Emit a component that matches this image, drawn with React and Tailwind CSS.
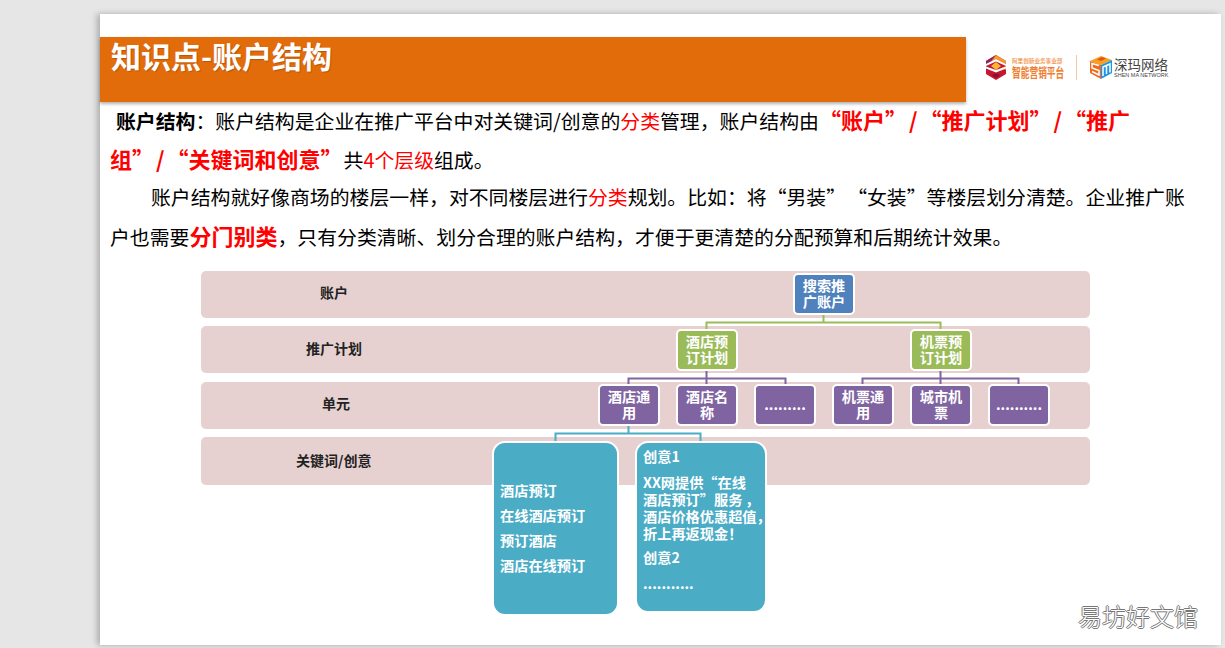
import React from "react";

const cjk = { fontFamily: '"Noto Sans CJK SC", "Noto Sans", sans-serif' };

function LogoA() {
  return (
    <svg width="20" height="25" viewBox="0 0 20 25" className="shrink-0">
      <polygon points="10,0 20,6 20,19 10,25 0,19 0,6" fill="#c3182f" />
      <polygon points="10,0 20,6 20,9 10,4 0,9 0,6" fill="#f59a23" />
      <polygon points="10,0 0,6 0,9 5,6.5" fill="#8e1f6e" />
      <polygon points="10,4 20,9 20,11 10,6.5 0,11 0,9" fill="#ffffff" />
      <polygon points="10,7 15,11 10,15 5,11" fill="#f7b733" />
      <polygon points="0,11 5,13 0,15" fill="#7d1a63" />
      <polygon points="20,11 15,13 20,15" fill="#ef7d22" />
      <polygon points="10,15 20,11.5 20,13.5 10,17.5 0,13.5 0,11.5" fill="#ffffff" />
      <polygon points="10,18 14,20.5 10,23 6,20.5" fill="#8b1230" />
    </svg>
  );
}

function LogoB() {
  return (
    <svg width="23" height="23" viewBox="0 0 23 23" className="shrink-0">
      <polygon points="11,0 22,4 11,9 0,5" fill="#f7a01f" />
      <polygon points="12,1 16,2.5 11,5 7,3.5" fill="#e8501f" />
      <polygon points="0,5 11,9 11,23 0,17" fill="#f0691c" />
      <polygon points="11,9 22,4 22,17 11,23" fill="#1e96e6" />
      <path d="M9 9.5 L2 7.5 V12 L9 14.5 V19 L2 15.5" stroke="#fff" strokeWidth="1.5" fill="none" />
      <path d="M13 20 V11 L16.5 9.5 V18 M16.5 9.5 L20 8 V16.5" stroke="#fff" strokeWidth="1.5" fill="none" />
    </svg>
  );
}

function Node({ className, children }) {
  return (
    <div
      className={`absolute w-[62px] h-[42px] rounded-[5px] border-2 border-white flex items-center justify-center text-center text-white font-bold text-[14.2px] leading-[16px] pb-[2px] ${className}`}
    >
      <div>{children}</div>
    </div>
  );
}

function Row({ label, className, labelClass }) {
  return (
    <div className={`rounded-[5px] bg-[#e7d0d0] flex items-center ${className}`}>
      <span className={`text-[14px] font-bold text-[#222] ${labelClass}`}>{label}</span>
    </div>
  );
}

function Connectors() {
  return (
    <svg width="889" height="175" viewBox="201 271 889 175" className="absolute left-0 top-0" fill="none">
      <path d="M823.5 315V322.5M706.5 329V322.5H940.5V329" stroke="#9bbb59" strokeWidth="2" />
      <path d="M706.5 370V378.5M628.5 385V378.5H785.5V385M706.5 378.5V385" stroke="#8064a2" strokeWidth="2" />
      <path d="M940.5 370V378.5M862.5 385V378.5H1018.5V385M940.5 378.5V385" stroke="#8064a2" strokeWidth="2" />
      <path d="M628.5 426V433.5M555.5 442V433.5H700.5V442" stroke="#4bacc6" strokeWidth="2" />
    </svg>
  );
}

export default function App() {
  return (
    <div style={cjk} className="w-[1225px] h-[648px] overflow-hidden bg-[#e6e6e6] pt-[14px] pl-[100px]">
      <div className="relative w-[1121px] h-[631px] bg-white shadow-[-3px_0_6px_rgba(0,0,0,0.25)] pt-[23px]">
        <div className="flex items-start">
          <div className="w-[866px] h-[65px] bg-[#e36c0a] pl-[11px] shadow-[0_2px_3px_rgba(0,0,0,0.3)]">
            <h1 className="text-[30px] leading-[36px] font-bold text-white [text-shadow:1px_1px_1px_rgba(0,0,0,0.2)]">知识点-账户结构</h1>
          </div>
          <div className="flex items-center ml-[20px] mt-[18px]">
            <LogoA />
            <div className="ml-[6px] flex flex-col w-[52px]">
              <span className="text-[5.6px] leading-[8px] text-[#f0a060] font-bold whitespace-nowrap">阿里创新业务事业部</span>
              <span className="text-[13px] leading-[14px] text-[#ee7f32] font-bold whitespace-nowrap origin-left scale-x-[0.67]">智能营销平台</span>
            </div>
            <div className="w-px h-[25px] bg-[#f3c9a5] ml-[12px]" />
            <div className="ml-[13px] flex items-center">
              <LogoB />
              <div className="ml-[1px] flex flex-col">
                <span className="text-[13.5px] leading-[15px] text-[#444]">深玛网络</span>
                <span className="text-[5.5px] leading-[6px] text-[#444] font-['Liberation_Sans'] whitespace-nowrap">SHEN MA NETWORK</span>
              </div>
            </div>
          </div>
        </div>

        <div className="-mt-[2px] pl-[10px] w-[1100px] text-[19.87px] text-black">
          <p className="h-[39px] leading-[39px] whitespace-nowrap pl-[6px]">
            <b>账户结构</b>：账户结构是企业在推广平台中对关键词/创意的<span className="text-[#ff0000]">分类</span>管理，账户结构由
            <b className="text-[22px] text-[#ff0000]">“账户”<span className="px-[2px]">/</span>“推广计划”<span className="px-[2px]">/</span>“推广</b>
          </p>
          <p className="h-[39px] leading-[39px] whitespace-nowrap">
            <b className="text-[22px] text-[#ff0000]">组”<span className="px-[2px]">/</span>“关键词和创意”</b><span className="ml-[1px]">共</span><span className="text-[#ff0000]">4个层级</span>组成。
          </p>
          <p className="h-[38px] leading-[38px] whitespace-nowrap pl-[41px]">
            账户结构就好像商场的楼层一样，对不同楼层进行<span className="text-[#ff0000]">分类</span>规划。比如：将“男装”<span className="ml-[11px]">“女装”</span>等楼层划分清楚。企业推广账
          </p>
          <p className="h-[39px] leading-[39px] whitespace-nowrap">
            户也需要<b className="text-[22px] text-[#ff0000]">分门别类</b>，只有分类清晰、划分合理的账户结构，才便于更清楚的分配预算和后期统计效果。
          </p>
        </div>

        <div className="relative ml-[101px] mt-[16px] w-[889px] flex flex-col">
          <Row label="账户" className="h-[47px]" labelClass="ml-[119px] mb-[4px]" />
          <Row label="推广计划" className="h-[47px] mt-[8px]" labelClass="ml-[105px] mb-[3px]" />
          <Row label="单元" className="h-[47px] mt-[9px]" labelClass="ml-[121px] mb-[5px]" />
          <Row label="关键词/创意" className="h-[48px] mt-[8px]" labelClass="ml-[95px] mb-[2px]" />
          <Connectors />
          <Node className="left-[592px] top-[2px] bg-[#4f81bd]">搜索推<br />广账户</Node>
          <Node className="left-[475px] top-[58px] bg-[#9bbb59]">酒店预<br />订计划</Node>
          <Node className="left-[709px] top-[58px] bg-[#9bbb59]">机票预<br />订计划</Node>
          <Node className="left-[397px] top-[113px] bg-[#8064a2]">酒店通<br />用</Node>
          <Node className="left-[475px] top-[113px] bg-[#8064a2]">酒店名<br />称</Node>
          <Node className="left-[553px] top-[113px] bg-[#8064a2]">.........</Node>
          <Node className="left-[631px] top-[113px] bg-[#8064a2]">机票通<br />用</Node>
          <Node className="left-[709px] top-[113px] bg-[#8064a2]">城市机<br />票</Node>
          <Node className="left-[787px] top-[113px] bg-[#8064a2]">..........</Node>
          <div className="absolute left-[291px] top-[170px] w-[127px] h-[175px] rounded-[13px] border-2 border-white bg-[#4bacc6] text-white font-bold text-[14.2px] flex flex-col justify-center pl-[6px] pb-[2px] gap-[5px] leading-[20px]">
            <span>酒店预订</span>
            <span>在线酒店预订</span>
            <span>预订酒店</span>
            <span>酒店在线预订</span>
          </div>
          <div className="absolute left-[434px] top-[170px] w-[132px] h-[172px] rounded-[13px] border-2 border-white bg-[#4bacc6] text-white font-bold text-[14.2px] leading-[17px] pl-[6px] pt-[5px] whitespace-nowrap">
            <p>创意1</p>
            <p className="mt-[9px]">XX网提供“在线<br />酒店预订”服务<span className="ml-[3px]">，</span><br />酒店价格优惠超值，<br />折上再返现金！</p>
            <p className="mt-[7px]">创意2</p>
            <p className="mt-[9px]">...........</p>
          </div>
        </div>

        <span className="absolute left-[978px] top-[585px] text-[24px] leading-[34px] text-white font-light [text-shadow:1px_0_#777,-1px_0_#777,0_1px_#777,0_-1px_#777]">易坊好文馆</span>
      </div>
    </div>
  );
}
